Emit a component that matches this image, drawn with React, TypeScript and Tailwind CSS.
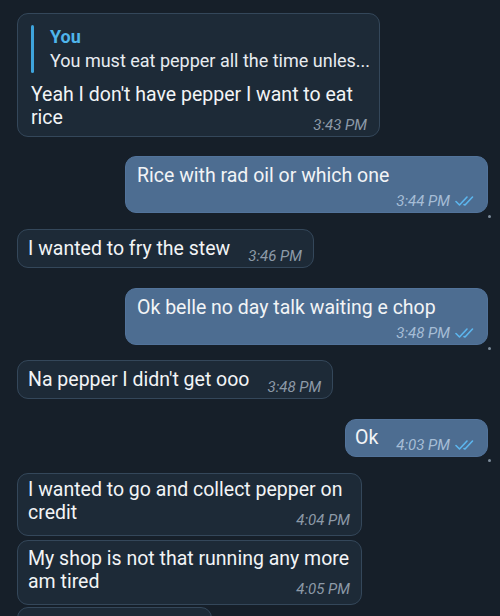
import React from "react";

type Side = "in" | "out";

function Checks() {
  return (
    <svg width="22" height="12" viewBox="0 0 22 12" fill="none" className="shrink-0">
      <path d="M1 6.5l3.5 3.5L12 2" stroke="#5cb6ee" strokeWidth="1.6" strokeLinecap="round" strokeLinejoin="round" />
      <path d="M9 9.5l1 0.5L17.5 2" stroke="#5cb6ee" strokeWidth="1.6" strokeLinecap="round" strokeLinejoin="round" />
    </svg>
  );
}

function Time({ t, side }: { t: string; side: Side }) {
  return (
    <span
      className={
        "flex items-center gap-[5px] shrink-0 text-[15px] leading-[16px] italic -mb-[4px] " +
        (side === "out" ? "text-[#a6bdd6]" : "text-[#8d9aa8]")
      }
    >
      {t}
      {side === "out" && <Checks />}
    </span>
  );
}

function Bubble({ side, className, children }: { side: Side; className?: string; children: React.ReactNode }) {
  const base =
    side === "out"
      ? "self-end bg-[#4d6d91] border border-[#52739a] rounded-[11px]"
      : "self-start bg-[#1d2a37] border border-[#34475a] rounded-[11px]";
  return (
    <div className={"relative shrink-0 " + base + " " + (className ?? "")}>
      {children}
      {side === "out" && (
        <span className="absolute -right-[4px] -bottom-[6px] w-[3px] h-[3px] rounded-full bg-[#7d8c9b]" />
      )}
    </div>
  );
}

export default function App() {
  return (
    <div
      className="w-[500px] h-[616px] overflow-hidden bg-[#161f29] text-[#f2f4f6] text-[19.5px] leading-[23px] flex flex-col pl-[17px] pr-[12px] pt-[13px]"
      style={{ fontFamily: "Roboto, 'Noto Sans', sans-serif" }}
    >
      {/* reply to own message */}
      <Bubble side="in" className="w-[363px] pl-[13px] pr-[12px] pt-[11px] pb-[7px]">
        <div className="flex">
          <div className="w-[3px] shrink-0 rounded-full bg-[#3ea4dc]" />
          <div className="pl-[16px] text-[18px] leading-[24px] whitespace-nowrap">
            <div className="font-bold text-[#4fb5ea]">You</div>
            <div className="text-[#e8ecf0]">You must eat pepper all the time unles...</div>
          </div>
        </div>
        <div className="mt-[10px]">Yeah I don't have pepper I want to eat</div>
        <div className="flex items-end justify-between">
          <span>rice</span>
          <Time t="3:43 PM" side="in" />
        </div>
      </Bubble>

      <Bubble side="out" className="mt-[19px] w-[363px] pl-[11px] pr-[10px] pt-[7px] pb-[7px]">
        <div>Rice with rad oil or which one</div>
        <div className="flex justify-end mt-[6px]">
          <Time t="3:44 PM" side="out" />
        </div>
      </Bubble>

      <Bubble side="in" className="mt-[16px] pl-[10px] pr-[11px] pt-[7px] pb-[7px]">
        <div className="flex items-end gap-[18px]">
          <span>I wanted to fry the stew</span>
          <Time t="3:46 PM" side="in" />
        </div>
      </Bubble>

      <Bubble side="out" className="mt-[20px] w-[363px] pl-[11px] pr-[10px] pt-[7px] pb-[7px]">
        <div>Ok belle no day talk waiting e chop</div>
        <div className="flex justify-end mt-[6px]">
          <Time t="3:48 PM" side="out" />
        </div>
      </Bubble>

      <Bubble side="in" className="mt-[15px] pl-[10px] pr-[11px] pt-[7px] pb-[7px]">
        <div className="flex items-end gap-[18px]">
          <span>Na pepper I didn't get ooo</span>
          <Time t="3:48 PM" side="in" />
        </div>
      </Bubble>

      <Bubble side="out" className="mt-[20px] pl-[9px] pr-[10px] pt-[6px] pb-[7px]">
        <div className="flex items-end gap-[18px]">
          <span>Ok</span>
          <Time t="4:03 PM" side="out" />
        </div>
      </Bubble>

      <Bubble side="in" className="mt-[16px] w-[345px] pl-[10px] pr-[11px] pt-[4px] pb-[11px]">
        <div>I wanted to go and collect pepper on</div>
        <div className="flex items-end justify-between">
          <span>credit</span>
          <Time t="4:04 PM" side="in" />
        </div>
      </Bubble>

      <Bubble side="in" className="mt-[4px] w-[345px] pl-[10px] pr-[11px] pt-[6px] pb-[11px]">
        <div>My shop is not that running any more</div>
        <div className="flex items-end justify-between">
          <span>am tired</span>
          <Time t="4:05 PM" side="in" />
        </div>
      </Bubble>

      <Bubble side="in" className="mt-[2px] w-[195px] h-[40px]">
        <span />
      </Bubble>
    </div>
  );
}
